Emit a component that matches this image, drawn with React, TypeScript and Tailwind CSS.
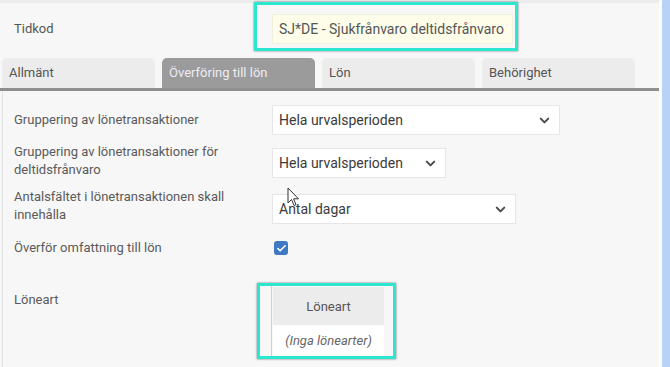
import { ChevronDown, Check } from "lucide-react";

type SelectProps = { value: string; width: string; mt: string };

function FakeSelect({ value, width, mt }: SelectProps) {
  return (
    <div
      className={`${width} ${mt} shrink-0 h-[30px] bg-white border border-[#e6e6e6] flex items-center justify-between pl-[6px] pr-[7px] text-[14px] text-[#3a3a3a]`}
    >
      <span>{value}</span>
      <ChevronDown size={15} strokeWidth={3.2} className="text-[#4a4a4a]" />
    </div>
  );
}

const TABS = ["Allmänt", "Överföring till lön", "Lön", "Behörighet"];

export default function App() {
  return (
    <div
      className="w-[670px] h-[367px] flex bg-[#f7f7f7] overflow-hidden relative"
      style={{ fontFamily: "Roboto, 'Liberation Sans', sans-serif" }}
    >
      <div className="flex-1 flex flex-col">
        {/* toppremsa */}
        <div className="h-[3px] bg-[#ececec]" />

        {/* Tidkod */}
        <div className="flex h-[55px]">
          <div className="w-[254px] shrink-0 pl-[14px] pt-[16px] text-[13px] text-[#555]">Tidkod</div>
          <div className="mt-[-1px] h-[49px] w-[264px] shrink-0 border-[3px] border-[#2de6cf] shadow-[0_0_2px_rgba(0,0,0,0.55)] flex">
            <div className="w-[15px] shrink-0" />
            <div className="mt-[9px] w-[241px] h-[30px] bg-[#fdfde9] border border-[#f0f0e0] flex items-center pl-[6px] text-[14px] text-[#555] whitespace-nowrap">
              SJ*DE - Sjukfrånvaro deltidsfrånvaro
            </div>
          </div>
        </div>

        {/* flikar */}
        <div className="flex gap-[7px] pl-[2px] h-[30px]">
          {TABS.map((t, i) => (
            <div
              key={t}
              className={`w-[153px] rounded-t-[5px] flex items-center pl-[7px] text-[13px] ${
                i === 1 ? "bg-[#9b9b9b] text-[#ececf4]" : "bg-[#ececec] text-[#555]"
              }`}
            >
              {t}
            </div>
          ))}
        </div>
        <div className="h-[3px] bg-[#8f8f8f]" />

        {/* innehåll */}
        <div className="flex-1 ml-[2px] border-l border-[#e2e2e2] text-[13px] text-[#5a5a5a] leading-[17px]">
          <div className="flex items-start mt-[14px]">
            <div className="w-[269px] shrink-0 pl-[11px] pt-[6px]">Gruppering av lönetransaktioner</div>
            <FakeSelect value="Hela urvalsperioden" width="w-[288px]" mt="mt-0" />
          </div>

          <div className="flex items-start mt-[8px]">
            <div className="w-[269px] shrink-0 pl-[11px] leading-[18px]">
              Gruppering av lönetransaktioner för
              <br />
              deltidsfrånvaro
            </div>
            <FakeSelect value="Hela urvalsperioden" width="w-[174px]" mt="mt-[5px]" />
          </div>

          <div className="flex items-start mt-[9px]">
            <div className="w-[269px] shrink-0 pl-[11px] leading-[18px]">
              Antalsfältet i lönetransaktionen skall
              <br />
              innehålla
            </div>
            <FakeSelect value="Antal dagar" width="w-[244px]" mt="mt-[6px]" />
          </div>

          <div className="flex items-start mt-[15px]">
            <div className="w-[271px] shrink-0 pl-[11px]">Överför omfattning till lön</div>
            <div className="mt-[2px] w-[14px] h-[14px] rounded-[3px] bg-[#3f78c4] flex items-center justify-center">
              <Check size={11} strokeWidth={3.5} className="text-white" />
            </div>
          </div>

          <div className="flex items-start mt-[27px]">
            <div className="w-[254px] shrink-0 pl-[11px] pt-[8px]">Löneart</div>
            <div className="w-[139px] h-[76px] shrink-0 border-[3px] border-[#2de6cf] shadow-[0_0_2px_rgba(0,0,0,0.55)] flex">
              <div className="w-[11px] shrink-0" />
              <div className="w-[113px] h-full border-l border-[#cfcfcf] pl-[1px] flex flex-col">
                <div className="h-[38px] mt-[1px] bg-[#ececec] flex items-center justify-center text-[#555]">
                  Löneart
                </div>
                <div className="flex-1 bg-white flex items-center justify-center italic text-[#666]">
                  (Inga lönearter)
                </div>
              </div>
            </div>
          </div>
        </div>
      </div>

      {/* högerkant */}
      <div className="w-[3px] bg-[#fcfcfc]" />
      <div className="w-[8px] bg-[#b8d2f7]" />

      {/* muspekare */}
      <svg
        className="absolute left-[287px] top-[187px]"
        width="14"
        height="20"
        viewBox="0 0 14 20"
      >
        <path
          d="M1 1 L1 16 L4.5 12.5 L7 18.5 L9 17.6 L6.6 11.8 L11.5 11.8 Z"
          fill="white"
          stroke="#333"
          strokeWidth="1"
          strokeLinejoin="round"
        />
      </svg>
    </div>
  );
}
